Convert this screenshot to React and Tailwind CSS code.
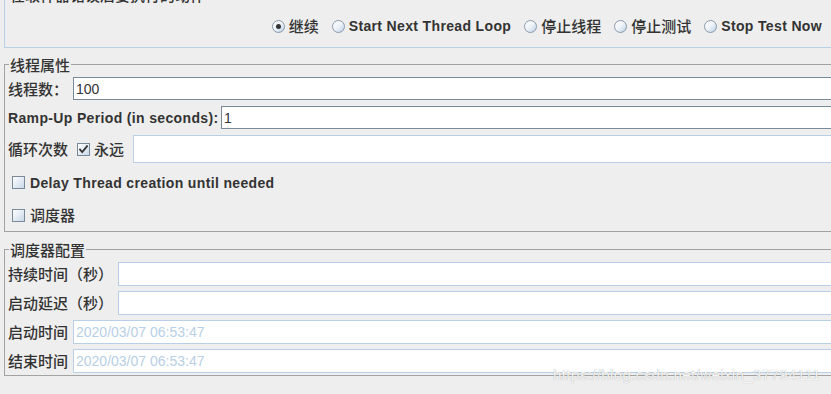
import React from "react";

const cjkBase = "font-['Noto_Sans_CJK_SC',sans-serif] text-[15px] font-medium text-[#333333] whitespace-nowrap";
const cjk = `${cjkBase} leading-[20px]`;
const latin = "font-['Liberation_Sans','Noto_Sans_CJK_SC',sans-serif] text-[14px] leading-[20px] tracking-[0.35px] font-bold text-[#333333] whitespace-nowrap";
const fieldText = "font-['Liberation_Sans',sans-serif] text-[14px] leading-[20px]";

function Radio({ checked }) {
  return (
    <span className="relative flex h-[13px] w-[13px] shrink-0 items-center justify-center rounded-full border border-[#8a9aab] bg-gradient-to-br from-white via-[#eef3f8] to-[#b8cfe5]">
      {checked && <span className="h-[5px] w-[5px] rounded-full bg-[#333333]" />}
    </span>
  );
}

function Checkbox({ checked }) {
  return (
    <span className="flex h-[13px] w-[13px] shrink-0 items-center justify-center border border-[#7a8a99] bg-gradient-to-br from-white to-[#c9d8e8]">
      {checked && (
        <svg width="9" height="9" viewBox="0 0 9 9">
          <path d="M1 4.5 L3.2 7 L8 1.2" stroke="#333333" strokeWidth="1.8" fill="none" strokeLinecap="square" />
        </svg>
      )}
    </span>
  );
}

function RadioItem({ label, checked, isCjk }) {
  return (
    <div className="flex items-center gap-[4px]">
      <Radio checked={checked} />
      <span className={isCjk ? cjk : latin}>{label}</span>
    </div>
  );
}

function Field({ value, h = "h-[23px]", border = "border-[#7a8a99]", muted }) {
  return (
    <div className={`flex flex-1 items-center border bg-white pl-[2px] ${h} ${border}`}>
      <span className={`${fieldText} ${muted ? "text-[#b8cfe5]" : "text-[#333333]"}`}>{value}</span>
    </div>
  );
}

export default function App() {
  return (
    <div className="relative h-[394px] w-[831px] overflow-hidden bg-[#eeeeee]">
      {/* Top panel */}
      <div className="ml-[4px] flex h-[48px] w-[900px] flex-col border-b border-l border-[#b8cfe5]">
        <div className={`${cjkBase} -mt-[14px] ml-[5px] h-[18px] leading-[18px] font-bold`}>在取样器错误后要执行的动作</div>
        <div className="mt-[12px] flex h-[20px] w-[827px] items-center justify-end gap-[13px] pr-[10px]">
          <RadioItem label="继续" checked isCjk />
          <RadioItem label="Start Next Thread Loop" />
          <RadioItem label="停止线程" isCjk />
          <RadioItem label="停止测试" isCjk />
          <RadioItem label="Stop Test Now" />
        </div>
      </div>

      {/* 线程属性 */}
      <fieldset className="ml-[4px] mt-[9px] w-[900px] border border-[#a3a3a3] px-[3px]">
        <legend className={`${cjkBase} ml-[1px] h-[15px] px-[1px] leading-[15px]`}>线程属性</legend>
        <div className="mt-[5px] flex items-center">
          <span className={`${cjk} w-[65px]`}>线程数：</span>
          <Field value="100" />
        </div>
        <div className="mt-[6px] flex items-center">
          <span className={`${latin} w-[213px]`}>Ramp-Up Period (in seconds):</span>
          <Field value="1" />
        </div>
        <div className="mt-[6px] flex items-center">
          <span className={`${cjk} w-[69px]`}>循环次数</span>
          <Checkbox checked />
          <span className={`${cjk} ml-[4px] w-[39px]`}>永远</span>
          <Field value="" h="h-[28px]" border="border-[#b8cfe5]" />
        </div>
        <div className="mt-[3px] flex h-[33px] items-center gap-[5px] pl-[4px]">
          <Checkbox />
          <span className={latin}>Delay Thread creation until needed</span>
        </div>
        <div className="flex h-[32px] items-center gap-[5px] pl-[4px]">
          <Checkbox />
          <span className={cjk}>调度器</span>
        </div>
      </fieldset>

      {/* 调度器配置 */}
      <fieldset className="ml-[4px] mt-[10px] w-[900px] border border-[#a3a3a3] px-[3px] pb-[2px]">
        <legend className={`${cjkBase} ml-[1px] h-[15px] px-[1px] leading-[15px]`}>调度器配置</legend>
        <div className="mt-[5px] flex items-center">
          <span className={`${cjk} w-[110px]`}>持续时间（秒）</span>
          <Field value="" h="h-[24px]" border="border-[#b8cfe5]" />
        </div>
        <div className="mt-[5px] flex items-center">
          <span className={`${cjk} w-[110px]`}>启动延迟（秒）</span>
          <Field value="" h="h-[24px]" border="border-[#b8cfe5]" />
        </div>
        <div className="mt-[5px] flex items-center">
          <span className={`${cjk} w-[65px]`}>启动时间</span>
          <Field value="2020/03/07 06:53:47" h="h-[24px]" border="border-[#b8cfe5]" muted />
        </div>
        <div className="mt-[5px] flex items-center">
          <span className={`${cjk} w-[65px]`}>结束时间</span>
          <Field value="2020/03/07 06:53:47" h="h-[24px]" border="border-[#b8cfe5]" muted />
        </div>
      </fieldset>

      {/* watermark */}
      <div className="absolute left-[553px] top-[366px] font-['Liberation_Sans',sans-serif] text-[15px] leading-[17px] tracking-[0.4px] text-[#f6f6f6] [text-shadow:0_0_1px_rgba(0,0,0,0.35)]">
        https://blog.csdn.net/weixin_37794111
      </div>
    </div>
  );
}
